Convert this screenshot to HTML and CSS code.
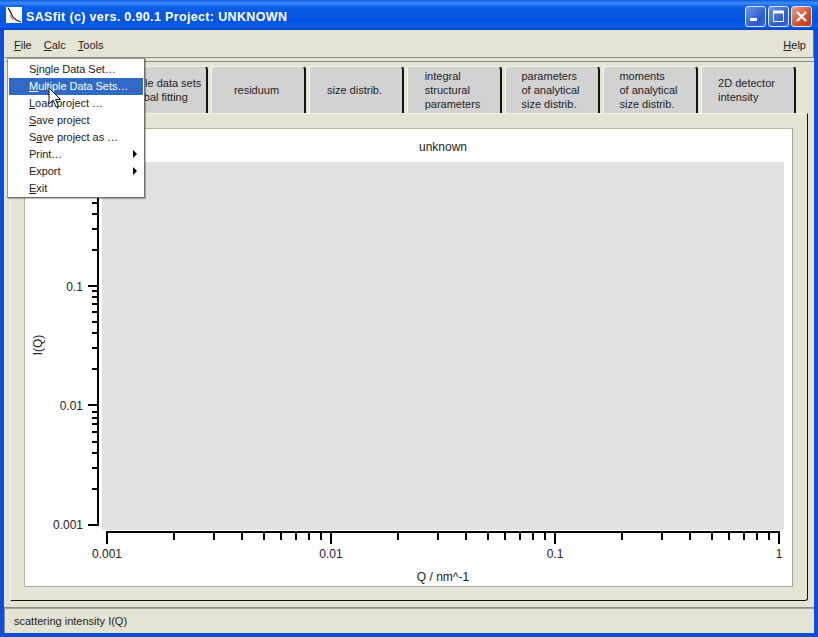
FILE: index.html
```html
<!DOCTYPE html>
<html lang="en">
<head>
    <meta charset="UTF-8">
    <title>SASfit (c) vers. 0.90.1 Project: UNKNOWN</title>
    <link rel="stylesheet" href="styles.css">
</head>
<body>
    <div class="window">
        <div class="titlebar">
            <svg class="app-icon" width="16" height="16" viewBox="0 0 16 16">
                <rect width="16" height="16" fill="#fff"/>
                <path d="M2 1 C4 3 5 7 7 10 C9 13 12 14 15 15" fill="none" stroke="#222" stroke-width="1.2"/>
                <path d="M4 8 L7 13" stroke="#c0506a" stroke-width="1"/>
            </svg>
            <span class="title-text">SASfit (c) vers. 0.90.1 Project: UNKNOWN</span>
            <div class="win-buttons">
                <div class="win-btn">
                    <svg width="19" height="19" viewBox="0 0 19 19"><rect x="4" y="11" width="7" height="3" fill="#fff"/></svg>
                </div>
                <div class="win-btn">
                    <svg width="19" height="19" viewBox="0 0 19 19"><path d="M4.5 5.5 H14.5 V14.5 H4.5 Z" fill="none" stroke="#fff" stroke-width="1"/><path d="M4 5 H15" stroke="#fff" stroke-width="3"/></svg>
                </div>
                <div class="win-btn close">
                    <svg width="19" height="19" viewBox="0 0 19 19"><path d="M5 5 L14 14 M14 5 L5 14" stroke="#fff" stroke-width="2.4"/></svg>
                </div>
            </div>
        </div>

        <div class="menubar">
            <span class="menu-title"><u>F</u>ile</span>
            <span class="menu-title"><u>C</u>alc</span>
            <span class="menu-title"><u>T</u>ools</span>
            <span class="menu-title help"><u>H</u>elp</span>
        </div>

        <div class="notebook">
            <div class="tabs">
                <div class="tab"></div>
                <div class="tab">multiple data sets<br>global fitting</div>
                <div class="tab">residuum</div>
                <div class="tab">size distrib.</div>
                <div class="tab tab-left">integral<br>structural<br>parameters</div>
                <div class="tab tab-left">parameters<br>of analytical<br>size distrib.</div>
                <div class="tab tab-left">moments<br>of analytical<br>size distrib.</div>
                <div class="tab tab-left">2D detector<br>intensity</div>
            </div>
            <div class="panel">
                <div class="plot">
                    <svg class="plot-svg" width="768" height="458" viewBox="25 129 768 458">
                        <rect x="102" y="162" width="682" height="368" fill="#e1e1e1"/>
                        <path class="axis" d="M98 162 V526 M88 525 H98 M88 405 H98 M88 286 H98 M106 532 H780"/>
                        <path class="axis" d="M92 489 H98 M92 468 H98 M92 453 H98 M92 442 H98 M92 432 H98 M92 424 H98 M92 418 H98 M92 412 H98
                            M92 369 H98 M92 348 H98 M92 333 H98 M92 322 H98 M92 312 H98 M92 304 H98 M92 297 H98 M92 291 H98
                            M92 250 H98 M92 229 H98 M92 214 H98 M92 203 H98"/>
                        <path class="axis" d="M107 532 V544 M331 532 V544 M555 532 V544 M779 532 V544"/>
                        <path class="axis" d="M174 532 V540 M214 532 V540 M242 532 V540 M264 532 V540 M281 532 V540 M296 532 V540 M309 532 V540 M321 532 V540
                            M398 532 V540 M438 532 V540 M466 532 V540 M488 532 V540 M505 532 V540 M520 532 V540 M533 532 V540 M545 532 V540
                            M622 532 V540 M662 532 V540 M690 532 V540 M712 532 V540 M729 532 V540 M744 532 V540 M757 532 V540 M769 532 V540"/>
                        <text class="plot-text" x="443" y="151" text-anchor="middle">unknown</text>
                        <text class="plot-text" x="83" y="291" text-anchor="end">0.1</text>
                        <text class="plot-text" x="83" y="410" text-anchor="end">0.01</text>
                        <text class="plot-text" x="83" y="529" text-anchor="end">0.001</text>
                        <text class="plot-text" x="107" y="558" text-anchor="middle">0.001</text>
                        <text class="plot-text" x="331" y="558" text-anchor="middle">0.01</text>
                        <text class="plot-text" x="555" y="558" text-anchor="middle">0.1</text>
                        <text class="plot-text" x="779" y="558" text-anchor="middle">1</text>
                        <text class="plot-text" x="443" y="581" text-anchor="middle">Q / nm^-1</text>
                        <text class="plot-text" x="0" y="0" text-anchor="middle" transform="translate(42 345) rotate(-90)">I(Q)</text>
                    </svg>
                </div>
            </div>
        </div>

        <div class="statusbar">scattering intensity I(Q)</div>
    </div>

    <div class="menu">
        <div class="menu-item">S<u>i</u>ngle Data Set…</div>
        <div class="menu-item active"><u>M</u>ultiple Data Sets…</div>
        <div class="menu-item"><u>L</u>oad project …</div>
        <div class="menu-item"><u>S</u>ave project</div>
        <div class="menu-item">S<u>a</u>ve project as …</div>
        <div class="menu-item arrow">Print…</div>
        <div class="menu-item arrow">Export</div>
        <div class="menu-item"><u>E</u>xit</div>
    </div>

    <svg class="cursor" width="14" height="22" viewBox="0 0 14 22">
        <path d="M1 1 V17 L5 13 L8 20 L10.5 19 L7.5 12.5 H12.5 Z" fill="#fff" stroke="#111" stroke-width="1"/>
    </svg>
</body>
</html>
```

FILE: styles.css
```css
html, body {
    margin: 0;
    padding: 0;
    overflow: hidden;
}
body {
    position: relative;
    width: 818px;
    height: 637px;
    font-family: "Liberation Sans", Arial, sans-serif;
    font-size: 11px;
    color: #222;
}
.window {
    box-sizing: border-box;
    width: 818px;
    height: 637px;
    display: flex;
    flex-direction: column;
    padding: 0 4px 4px;
    background-color: #0a4fdc;
}
.titlebar {
    display: flex;
    align-items: center;
    height: 30px;
    margin: 0 -4px;
    padding: 0 6px;
    box-sizing: border-box;
    background: linear-gradient(to bottom, #0a5ae0 0, #3d8cf5 3px, #0a5fe8 7px, #0353e0 20px, #0a5cec 27px, #0340c0 30px);
}
.app-icon {
    flex: none;
}
.title-text {
    margin-left: 4px;
    margin-top: 4px;
    font-size: 12.5px;
    font-weight: bold;
    letter-spacing: 0.35px;
    color: #fff;
}
.win-buttons {
    display: flex;
    gap: 2px;
    margin-left: auto;
    margin-top: 3px;
}
.win-btn {
    width: 19px;
    height: 19px;
    border: 1px solid #dfe8fa;
    border-radius: 3px;
    background: linear-gradient(135deg, #6f96ea, #2a58d0 70%, #3a6ae0);
}
.win-btn svg {
    display: block;
}
.win-btn.close {
    background: linear-gradient(135deg, #e8a088, #d0502c 60%, #b83a1c);
}
.menubar {
    display: flex;
    align-items: center;
    gap: 12px;
    height: 28px;
    padding: 2px 7px 0 10px;
    box-sizing: border-box;
    background-color: #e5e4d4;
    border-bottom: 1px solid #8c8c82;
    border-right: 1px solid #77776e;
}
.menu-title {
    font-size: 11px;
}
.menu-title.help {
    margin-left: auto;
}
.notebook {
    flex: 1;
    display: flex;
    flex-direction: column;
    min-height: 0;
    padding: 8px 6px 0 6px;
    background-color: #e5e4d4;
    border-bottom: 1px solid #8c8c82;
}
.tabs {
    display: flex;
    gap: 3px;
    height: 47px;
    padding-left: 5px;
    position: relative;
}
.tabs::before {
    content: "";
    position: absolute;
    left: -4px;
    right: -6px;
    top: -5px;
    border-top: 1px solid #8c8c82;
}
.tab {
    box-sizing: border-box;
    width: 95px;
    display: flex;
    align-items: center;
    justify-content: center;
    text-align: center;
    line-height: 14px;
    padding-right: 3px;
    background-color: #d2d2d2;
    border-top: 1px solid #f4f4ec;
    border-left: 1px solid #f4f4ec;
    border-right: 2px solid #111;
    border-top-right-radius: 4px;
}
.tab-left {
    text-align: left;
}
.panel {
    flex: 1;
    min-height: 0;
    margin-bottom: 6px;
    padding: 14px 14px 13px 13px;
    background-color: #e5e4d4;
    border-top: 1px solid #f6f6ee;
    border-left: 1px solid #f6f6ee;
    border-right: 1px solid #111;
    border-bottom: 1px solid #111;
    border-bottom-right-radius: 3px;
}
.plot {
    box-sizing: border-box;
    height: 100%;
    background-color: #fff;
    border-left: 1px solid #b8b8a0;
    border-top: 1px solid #b8b8a0;
    border-right: 1px solid #a8a8a8;
    border-bottom: 1px solid #a8a8a8;
}
.plot-svg {
    display: block;
}
.axis {
    fill: none;
    stroke: #000;
    stroke-width: 2;
}
.plot-text {
    font-family: "Liberation Sans", Arial, sans-serif;
    font-size: 12px;
    fill: #222;
}
.statusbar {
    height: 24px;
    line-height: 25px;
    padding-left: 9px;
    background-color: #e5e4d4;
    border-left: 1px solid #8c8c82;
    border-top: 1px solid #a0a098;
}
.menu {
    position: absolute;
    left: 7px;
    top: 58px;
    width: 138px;
    height: 140px;
    box-sizing: border-box;
    padding: 2px 1px 0 1px;
    background-color: #fff;
    border: 1px solid #9a9a92;
    border-right-color: #70706a;
    border-bottom-color: #70706a;
    box-shadow: 1px 1px 1px rgba(0, 0, 0, 0.25);
}
.menu-item {
    position: relative;
    height: 17px;
    line-height: 17px;
    padding-left: 20px;
    font-size: 11px;
    letter-spacing: -0.05px;
}
.menu-item.active {
    background-color: #316ac5;
    color: #fff;
}
.menu-item.arrow::after {
    content: "";
    position: absolute;
    right: 6px;
    top: 4px;
    border-left: 4px solid #000;
    border-top: 4px solid transparent;
    border-bottom: 4px solid transparent;
}
.cursor {
    position: absolute;
    left: 48px;
    top: 87px;
}
```
